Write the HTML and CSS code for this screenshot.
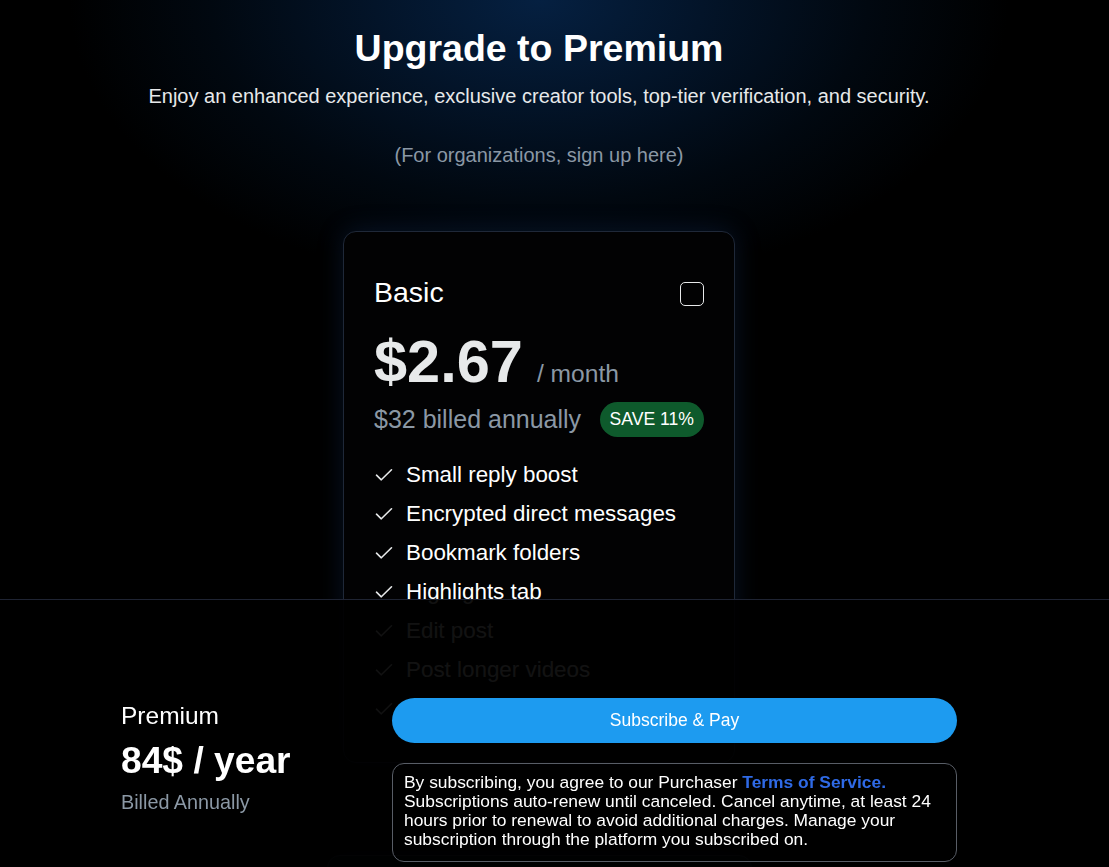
FILE: index.html
```html
<!DOCTYPE html>
<html lang="en">
<head>
<meta charset="utf-8">
<title>Upgrade to Premium</title>
<link rel="stylesheet" href="styles.css">
</head>
<body>
<div class="page">
  <header class="intro">
    <h1 class="title">Upgrade to Premium</h1>
    <p class="subtitle">Enjoy an enhanced experience, exclusive creator tools, top-tier verification, and security.</p>
    <p class="org">(For organizations, sign up here)</p>
  </header>

  <section class="plans">
    <article class="card">
      <div class="card-head">
        <h2 class="plan-name">Basic</h2>
        <span class="checkbox"></span>
      </div>
      <div class="price-row">
        <span class="price">$2.67</span>
        <span class="per">/ month</span>
      </div>
      <div class="billed-row">
        <span class="billed">$32 billed annually</span>
        <span class="save">SAVE 11%</span>
      </div>
      <ul class="features">
        <li><svg class="check" viewBox="0 0 18 14"><path d="M1.5 7.2 L6.3 11.8 L16.5 1.8"/></svg>Small reply boost</li>
        <li><svg class="check" viewBox="0 0 18 14"><path d="M1.5 7.2 L6.3 11.8 L16.5 1.8"/></svg>Encrypted direct messages</li>
        <li><svg class="check" viewBox="0 0 18 14"><path d="M1.5 7.2 L6.3 11.8 L16.5 1.8"/></svg>Bookmark folders</li>
        <li><svg class="check" viewBox="0 0 18 14"><path d="M1.5 7.2 L6.3 11.8 L16.5 1.8"/></svg>Highlights tab</li>
        <li><svg class="check" viewBox="0 0 18 14"><path d="M1.5 7.2 L6.3 11.8 L16.5 1.8"/></svg>Edit post</li>
        <li><svg class="check" viewBox="0 0 18 14"><path d="M1.5 7.2 L6.3 11.8 L16.5 1.8"/></svg>Post longer videos</li>
        <li><svg class="check" viewBox="0 0 18 14"><path d="M1.5 7.2 L6.3 11.8 L16.5 1.8"/></svg>Longer posts</li>
      </ul>
    </article>
    <article class="card card-wide"></article>
  </section>
</div>

<footer class="checkout">
  <div class="checkout-inner">
    <div class="summary">
      <div class="sum-plan">Premium</div>
      <div class="sum-price">84$ / year</div>
      <div class="sum-billed">Billed Annually</div>
    </div>
    <div class="actions">
      <button class="pay">Subscribe &amp; Pay</button>
      <div class="terms">By subscribing, you agree to our Purchaser <a class="tos" href="#">Terms of Service.</a> Subscriptions auto-renew until canceled. Cancel anytime, at least 24 hours prior to renewal to avoid additional charges. Manage your subscription through the platform you subscribed on.</div>
    </div>
  </div>
</footer>
</body>
</html>
```

FILE: styles.css
```css
* { box-sizing: border-box; }

html, body {
  margin: 0;
  padding: 0;
  background: #000;
}

body {
  font-family: "Liberation Sans", Arial, sans-serif;
  color: #e7e9ea;
  min-height: 867px;
  background:
    radial-gradient(ellipse 470px 290px at 539px 0, #052041 0%, #031429 35%, #010810 70%, #000 100%),
    #000;
  background-repeat: no-repeat;
}

.page {
  width: 1078px;
  padding-top: 28px;
}

.intro {
  text-align: center;
}

.title {
  margin: 0;
  font-size: 37.5px;
  font-weight: 700;
  line-height: 40px;
  color: #ffffff;
}

.subtitle {
  margin: 17px 0 0;
  font-size: 20px;
  line-height: 22px;
  color: #e7e9ea;
}

.org {
  margin: 37px 0 0;
  font-size: 20px;
  line-height: 22px;
  color: #8b98a5;
}

.plans {
  display: flex;
  flex-direction: column;
  align-items: center;
  gap: 92px;
  margin-top: 65px;
  padding-bottom: 200px;
}

.card {
  width: 392px;
  border: 1px solid #1f2838;
  border-radius: 13px;
  background: #020203;
  padding: 43px 30px 34px;
  box-shadow: 0 0 26px rgba(30, 70, 130, 0.28);
}

.card-wide {
  width: 425px;
  height: 300px;
  background: #0b0e14;
  border-color: #2a3242;
}

.card-head {
  display: flex;
  justify-content: space-between;
  align-items: center;
}

.plan-name {
  margin: 0;
  font-size: 28.5px;
  font-weight: 400;
  line-height: 34px;
  color: #ffffff;
}

.checkbox {
  width: 24px;
  height: 24px;
  border: 1.5px solid #e7e9ea;
  border-radius: 5px;
  margin-top: 4px;
}

.price-row {
  display: flex;
  align-items: baseline;
  gap: 14px;
  margin-top: 18px;
}

.price {
  font-size: 59.5px;
  font-weight: 700;
  line-height: 70px;
  color: #e7e9ea;
}

.per {
  font-size: 24.6px;
  color: #8b98a5;
}

.billed-row {
  display: flex;
  justify-content: space-between;
  align-items: center;
  margin-top: 5px;
}

.billed {
  font-size: 25px;
  color: #8b98a5;
}

.save {
  background: #0e5a2c;
  color: #ffffff;
  font-size: 17.6px;
  line-height: 35px;
  height: 35px;
  padding: 0 10px;
  border-radius: 18px;
}

.features {
  list-style: none;
  margin: 18px 0 0;
  padding: 0;
  display: flex;
  flex-direction: column;
}

.features li {
  display: flex;
  align-items: center;
  height: 39px;
  font-size: 22.4px;
  color: #ffffff;
}

.check {
  width: 18px;
  height: 14px;
  margin: 0 13px 0 1px;
  fill: none;
  stroke: #e7e9ea;
  stroke-width: 1.6;
  stroke-linecap: round;
  stroke-linejoin: round;
}

.checkout {
  position: fixed;
  left: 0;
  right: 0;
  bottom: 0;
  height: 268px;
  background: rgba(0, 0, 0, 0.93);
  border-top: 1px solid #1f2433;
}

.checkout-inner {
  width: 1078px;
  display: flex;
  justify-content: center;
  padding-top: 98px;
}

.summary {
  width: 271px;
  display: flex;
  flex-direction: column;
  padding-top: 4px;
}

.sum-plan {
  font-size: 24.5px;
  line-height: 28px;
  color: #ffffff;
}

.sum-price {
  margin-top: 9px;
  font-size: 37.2px;
  font-weight: 700;
  line-height: 42px;
  color: #ffffff;
}

.sum-billed {
  margin-top: 10px;
  font-size: 19.8px;
  line-height: 22px;
  color: #8b98a5;
}

.actions {
  width: 565px;
  display: flex;
  flex-direction: column;
  gap: 20px;
}

.pay {
  height: 45px;
  border: none;
  border-radius: 23px;
  background: #1d9bf0;
  color: #ffffff;
  font-family: "Liberation Sans", Arial, sans-serif;
  font-size: 17.5px;
}

.terms {
  border: 1px solid #585d66;
  border-radius: 12px;
  padding: 9px 11px 12px;
  font-size: 17.4px;
  line-height: 19px;
  color: #ffffff;
}

.tos {
  color: #2f6ae6;
  font-weight: 700;
  text-decoration: none;
}
```
